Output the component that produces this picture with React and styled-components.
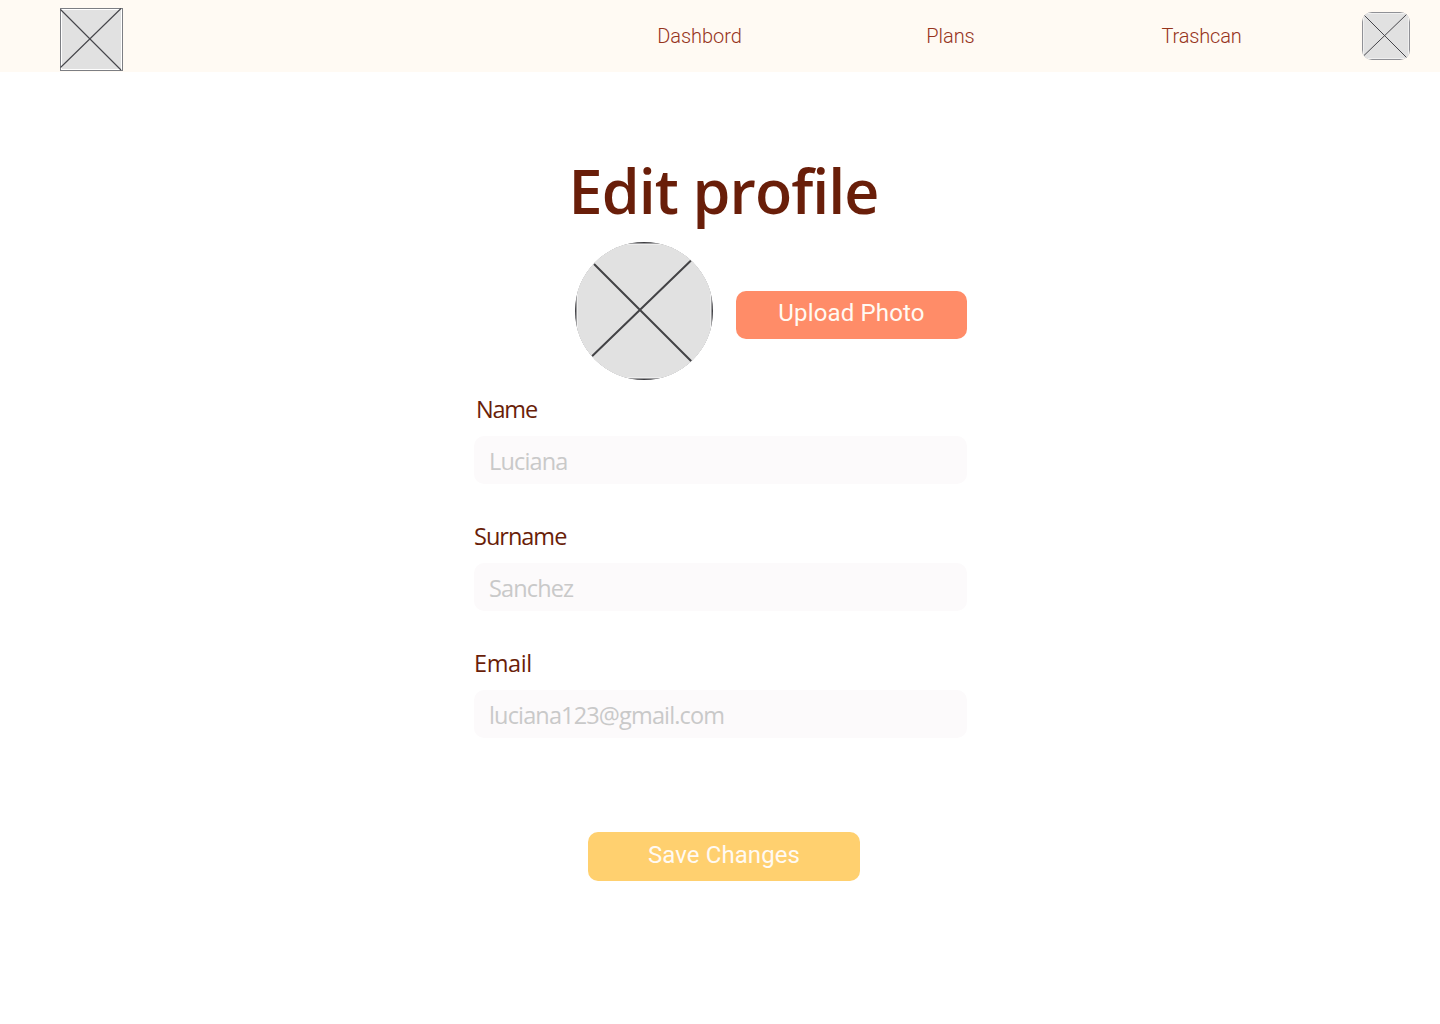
import React from "react";
import styled, { createGlobalStyle } from "styled-components";

const GlobalStyle = createGlobalStyle`
  * { box-sizing: border-box; }
  body { margin: 0; background: #fff; }
`;

const Page = styled.div`
  min-height: 1024px;
  background: #fff;
  font-family: "Open Sans", "Noto Sans", sans-serif;
  color: #691e09;
`;

const Header = styled.header`
  display: flex;
  align-items: flex-start;
  height: 72px;
  padding: 8px 30px 0 60px;
  background: #fffaf3;
`;

const Nav = styled.nav`
  display: grid;
  grid-template-columns: repeat(3, 251px);
  margin-left: 451px;
`;

const NavLink = styled.a`
  height: 56px;
  line-height: 57px;
  text-align: center;
  white-space: nowrap;
  font-family: Roboto, sans-serif;
  font-size: 20px;
  font-weight: 300;
  letter-spacing: ${(p) => p.$spacing};
  color: #96341b;
`;

const AccountLink = styled.a`
  display: block;
  margin: 4px 0 0 auto;
`;

const Picture = styled.svg`
  display: block;
  flex: none;
  border-radius: ${(p) => p.$radius || 0};
`;

const Content = styled.main`
  display: flex;
  flex-direction: column;
  width: 493px;
  margin: 0 0 0 474px;
  padding-top: 79px;
`;

const Title = styled.h1`
  width: 499px;
  height: 80px;
  margin: 0;
  text-align: center;
  white-space: nowrap;
  font-size: 61px;
  line-height: 80px;
  font-weight: 600;
  letter-spacing: -1px;
`;

const PhotoRow = styled.div`
  display: flex;
  align-items: center;
  gap: 23px;
  margin: 11px 0 0 101px;
`;

const Button = styled.button`
  width: ${(p) => p.$width};
  height: ${(p) => p.$height};
  margin: ${(p) => p.$margin};
  padding: 0 0 4px;
  border: 0;
  border-radius: 10px;
  background: ${(p) => p.$color};
  color: #fffaf3;
  font-family: Roboto, sans-serif;
  font-size: 24px;
  font-weight: 400;
  letter-spacing: ${(p) => p.$spacing};
  white-space: nowrap;
`;

const Form = styled.form`
  display: grid;
  gap: 31px;
  margin-top: 8px;
`;

const Field = styled.div`
  display: grid;
  grid-template-rows: 48px 48px;
`;

const Label = styled.label`
  padding-left: ${(p) => p.$indent};
  line-height: 42px;
  font-size: 23.5px;
  letter-spacing: ${(p) => p.$spacing};
`;

const Input = styled.input`
  width: 100%;
  height: 48px;
  padding: 1px 14px 0 15px;
  border: 0;
  border-radius: 10px;
  background: #fcfafb;
  font-family: inherit;
  font-size: 23.5px;
  letter-spacing: -0.85px;
  &::placeholder { color: #c9c9c9; opacity: 1; }
`;

function Logo() {
  return (
    <Picture width="63" height="63" viewBox="0 0 63 63">
      <rect width="63" height="63" fill="#7c7e83" />
      <rect x="1" y="1" width="61" height="61" fill="#fff" />
      <rect x="2" y="2" width="59" height="59" fill="#e1e1e1" />
      <path d="M.5 1.5 61 62M.5 59.5 61 .5" stroke="#45454a" strokeWidth="1.1" />
    </Picture>
  );
}

function Account() {
  return (
    <Picture width="48" height="48" viewBox="0 0 48 48" $radius="10px">
      <rect width="48" height="48" fill="#909196" />
      <rect x="1" y="1" width="46" height="46" fill="#f0f0f0" />
      <rect x="2" y="2" width="44" height="44" fill="#e1e1e1" />
      <path d="M2 3 45 46M2 43.5 45 2" stroke="#45454a" strokeWidth="1" />
    </Picture>
  );
}

function ProfilePhoto() {
  return (
    <Picture width="138" height="138" viewBox="0 0 138 138" $radius="50%">
      <rect width="138" height="138" fill="#3e3e42" />
      <rect x="1.5" y="1.5" width="135" height="135" fill="#f8f8f8" />
      <rect x="2.5" y="2.5" width="133" height="133" fill="#e1e1e1" />
      <path d="M19 22 116.3 119.3M17 114.3 116 18.5" stroke="#434346" strokeWidth="2" />
    </Picture>
  );
}

const links = [
  { text: "Dashbord", spacing: "-0.05px" },
  { text: "Plans", spacing: "-0.05px" },
  { text: "Trashcan", spacing: "-0.15px" },
];

const fields = [
  { id: "name", label: "Name", value: "Luciana", indent: "2px", spacing: "-1.2px" },
  { id: "surname", label: "Surname", value: "Sanchez", indent: "0px", spacing: "-1px" },
  { id: "email", label: "Email", value: "luciana123@gmail.com", indent: "0px", spacing: "-0.4px" },
];

export default function App() {
  return (
    <Page>
      <GlobalStyle />
      <Header>
        <Logo />
        <Nav>
          {links.map((l) => (
            <NavLink key={l.text} $spacing={l.spacing}>{l.text}</NavLink>
          ))}
        </Nav>
        <AccountLink><Account /></AccountLink>
      </Header>
      <Content>
        <Title>Edit profile</Title>
        <PhotoRow>
          <ProfilePhoto />
          <Button type="button" $width="231px" $height="48px" $margin="8px 0 0" $color="#ff8c68" $spacing="0.15px">
            Upload Photo
          </Button>
        </PhotoRow>
        <Form>
          {fields.map((f) => (
            <Field key={f.id}>
              <Label htmlFor={f.id} $indent={f.indent} $spacing={f.spacing}>{f.label}</Label>
              <Input id={f.id} placeholder={f.value} />
            </Field>
          ))}
        </Form>
        <Button type="button" $width="272px" $height="49px" $margin="94px 0 0 114px" $color="#ffd06f" $spacing="0.1px">
          Save Changes
        </Button>
      </Content>
    </Page>
  );
}
